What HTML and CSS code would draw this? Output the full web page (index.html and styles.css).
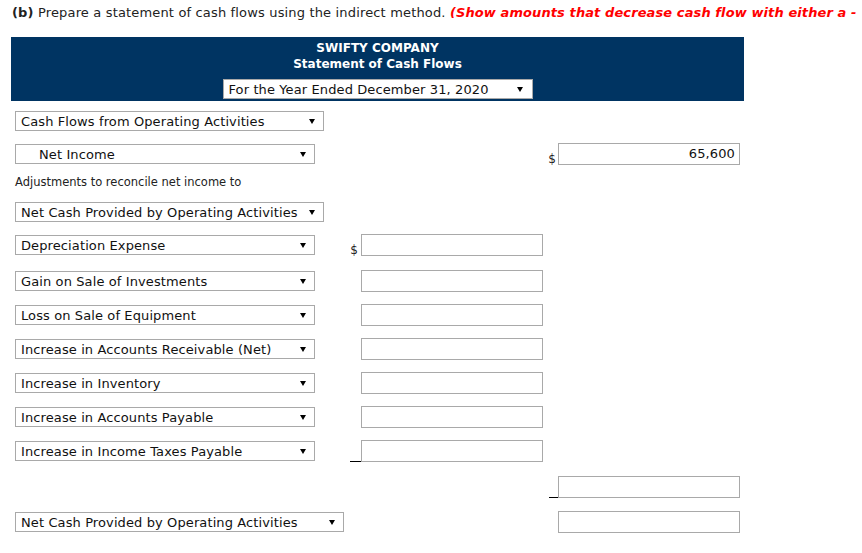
FILE: index.html
```html
<!DOCTYPE html>
<html>
<head>
<meta charset="utf-8">
<link rel="stylesheet" href="styles.css">
</head>
<body>
<div class="page">
  <p class="instr"><b>(b)</b> Prepare a statement of cash flows using the indirect method. <span class="note">(Show amounts that decrease cash flow with either a -</span></p>

  <div class="banner">
    <div class="co">SWIFTY COMPANY</div>
    <div class="co">Statement of Cash Flows</div>
    <div class="select sel-period"><span>For the Year Ended December 31, 2020</span><svg class="arrow" width="6" height="5" viewBox="0 0 6 5"><polygon points="0,0 6,0 3,5" fill="#000"/></svg></div>
  </div>

  <div class="rows">
    <div class="row r1">
      <div class="cell-l"><div class="select w309"><span>Cash Flows from Operating Activities</span><svg class="arrow" width="6" height="5" viewBox="0 0 6 5"><polygon points="0,0 6,0 3,5" fill="#000"/></svg></div></div>
    </div>

    <div class="row r2">
      <div class="cell-l"><div class="select w300 indent"><span>Net Income</span><svg class="arrow" width="6" height="5" viewBox="0 0 6 5"><polygon points="0,0 6,0 3,5" fill="#000"/></svg></div></div>
      <div class="cell-m"></div>
      <div class="cell-r"><span class="sign">$</span><div class="input">65,600</div></div>
    </div>

    <div class="textrow">Adjustments to reconcile net income to</div>

    <div class="row r4">
      <div class="cell-l"><div class="select w309"><span>Net Cash Provided by Operating Activities</span><svg class="arrow" width="6" height="5" viewBox="0 0 6 5"><polygon points="0,0 6,0 3,5" fill="#000"/></svg></div></div>
    </div>

    <div class="row r5">
      <div class="cell-l"><div class="select w300"><span>Depreciation Expense</span><svg class="arrow" width="6" height="5" viewBox="0 0 6 5"><polygon points="0,0 6,0 3,5" fill="#000"/></svg></div></div>
      <div class="cell-m"><span class="sign">$</span><div class="input"></div></div>
    </div>

    <div class="row r6">
      <div class="cell-l"><div class="select w300"><span>Gain on Sale of Investments</span><svg class="arrow" width="6" height="5" viewBox="0 0 6 5"><polygon points="0,0 6,0 3,5" fill="#000"/></svg></div></div>
      <div class="cell-m"><span class="sign"></span><div class="input"></div></div>
    </div>

    <div class="row">
      <div class="cell-l"><div class="select w300"><span>Loss on Sale of Equipment</span><svg class="arrow" width="6" height="5" viewBox="0 0 6 5"><polygon points="0,0 6,0 3,5" fill="#000"/></svg></div></div>
      <div class="cell-m"><span class="sign"></span><div class="input"></div></div>
    </div>

    <div class="row">
      <div class="cell-l"><div class="select w300"><span>Increase in Accounts Receivable (Net)</span><svg class="arrow" width="6" height="5" viewBox="0 0 6 5"><polygon points="0,0 6,0 3,5" fill="#000"/></svg></div></div>
      <div class="cell-m"><span class="sign"></span><div class="input"></div></div>
    </div>

    <div class="row">
      <div class="cell-l"><div class="select w300"><span>Increase in Inventory</span><svg class="arrow" width="6" height="5" viewBox="0 0 6 5"><polygon points="0,0 6,0 3,5" fill="#000"/></svg></div></div>
      <div class="cell-m"><span class="sign"></span><div class="input"></div></div>
    </div>

    <div class="row">
      <div class="cell-l"><div class="select w300"><span>Increase in Accounts Payable</span><svg class="arrow" width="6" height="5" viewBox="0 0 6 5"><polygon points="0,0 6,0 3,5" fill="#000"/></svg></div></div>
      <div class="cell-m"><span class="sign"></span><div class="input"></div></div>
    </div>

    <div class="row">
      <div class="cell-l"><div class="select w300"><span>Increase in Income Taxes Payable</span><svg class="arrow" width="6" height="5" viewBox="0 0 6 5"><polygon points="0,0 6,0 3,5" fill="#000"/></svg></div></div>
      <div class="cell-m"><span class="sign rule"></span><div class="input"></div></div>
    </div>

    <div class="row r12">
      <div class="cell-l"></div>
      <div class="cell-m"></div>
      <div class="cell-r"><span class="sign rule-r"></span><div class="input"></div></div>
    </div>

    <div class="row r13">
      <div class="cell-l"><div class="select w329"><span>Net Cash Provided by Operating Activities</span><svg class="arrow" width="6" height="5" viewBox="0 0 6 5"><polygon points="0,0 6,0 3,5" fill="#000"/></svg></div></div>
      <div class="cell-m"></div>
      <div class="cell-r"><span class="sign"></span><div class="input"></div></div>
    </div>
  </div>
</div>
</body>
</html>
```

FILE: styles.css
```css
html, body {
  margin: 0;
  padding: 0;
  background: #fff;
  overflow: hidden;
}

body {
  font-family: Verdana, "DejaVu Sans", sans-serif;
  font-size: 13px;
  color: #222;
}

.page {
  padding-left: 11px;
}

.instr {
  margin: 5px 0 0 1px;
  line-height: 16px;
  white-space: nowrap;
  font-size: 13px;
  letter-spacing: 0.16px;
}

.instr b {
  font-weight: bold;
}

.note {
  color: #f00;
  font-weight: bold;
  font-style: italic;
  letter-spacing: 0.1px;
}

.banner {
  margin-top: 16px;
  width: 733px;
  height: 64px;
  box-sizing: border-box;
  background: #003462;
  padding-top: 3px;
  display: flex;
  flex-direction: column;
  align-items: center;
}

.co {
  color: #fff;
  font-weight: bold;
  font-size: 12px;
  line-height: 16px;
}

.select {
  box-sizing: border-box;
  height: 20px;
  border: 1px solid #a9a9a9;
  background: #fff;
  display: flex;
  align-items: center;
  justify-content: space-between;
  padding: 0 8px 0 5px;
  color: #111;
  font-size: 13px;
  letter-spacing: 0.11px;
  white-space: nowrap;
}

.sel-period {
  margin-top: 7px;
  width: 310px;
  padding-right: 9px;
}

.arrow {
  flex: none;
  display: block;
}

.w300 { width: 300px; }
.w309 { width: 309px; }
.w329 { width: 329px; }

.indent {
  padding-left: 23px;
}

.rows {
  padding-left: 4px;
  display: flex;
  flex-direction: column;
}

.row {
  display: flex;
  align-items: center;
  height: 22px;
  margin-top: 12px;
}

.r1 { margin-top: 9px; }
.r2 { margin-top: 11px; }
.r4 { margin-top: 11px; }
.r5 { margin-top: 11px; }
.r6 { margin-top: 14px; }
.r12 { margin-top: 14px; }
.r13 { margin-top: 13px; }

.textrow {
  margin-top: 9px;
  height: 16px;
  line-height: 16px;
  font-size: 11.5px;
  color: #222;
}

.cell-l {
  width: 335px;
  flex: none;
  display: flex;
  align-items: center;
}

.cell-m {
  width: 197px;
  flex: none;
  display: flex;
  align-items: flex-end;
  align-self: stretch;
}

.cell-r {
  flex: none;
  display: flex;
  align-items: flex-end;
  align-self: stretch;
}

.sign {
  width: 11px;
  box-sizing: border-box;
  flex: none;
  font-size: 12px;
  line-height: 12px;
  text-align: right;
  padding-right: 2px;
  color: #222;
}

.cell-m .sign {
  padding-right: 3px;
}

.sign.rule {
  border-bottom: 1px solid #000;
  height: 1px;
  padding: 0;
  width: 11px;
}

.sign.rule-r {
  border-bottom: 1px solid #000;
  height: 1px;
  padding: 0;
  width: 9px;
  margin-left: 2px;
}

.input {
  box-sizing: border-box;
  width: 182px;
  height: 22px;
  border: 1px solid #a9a9a9;
  background: #fff;
  text-align: right;
  padding-right: 4px;
  line-height: 20px;
  font-size: 13px;
  letter-spacing: 0.11px;
  color: #111;
}
```
